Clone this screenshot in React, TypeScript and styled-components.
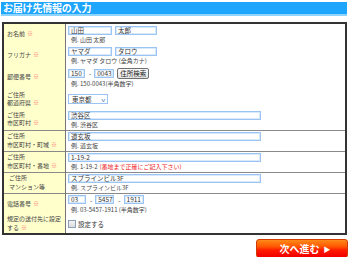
import React from "react";
import styled, { createGlobalStyle } from "styled-components";

const Global = createGlobalStyle`
  html, body {
    margin: 0;
    padding: 0;
    background: #ffffff;
  }
  body {
    font-family: "Noto Sans CJK JP", "Noto Sans", sans-serif;
    color: #333333;
  }
`;

const Page = styled.div`
  width: 350px;
  height: 257px;
  padding: 2px 0 0 1px;
  box-sizing: border-box;
  display: flex;
  flex-direction: column;
`;

const Title = styled.h1`
  margin: 0;
  width: 346px;
  height: 14px;
  box-sizing: border-box;
  background: #1ea5fd;
  border-bottom: 2px solid #8fd3ff;
  color: #ffffff;
  font-size: 10px;
  font-weight: bold;
  line-height: 12px;
  padding-left: 2px;
  letter-spacing: -0.2px;
`;

const Form = styled.table`
  margin: 6px 0 0 1px;
  width: 345px;
  border-collapse: collapse;
  border: 2px solid #333333;
  table-layout: fixed;
`;

const Row = styled.tr<{ $h: number }>`
  height: ${(p) => p.$h}px;
  & + & > td,
  & + & > th {
    border-top: 1px solid #8a8a8a;
  }
`;

const Label = styled.th<{ $indent?: boolean }>`
  width: 58px;
  background: #ffffcc;
  border-right: 1px solid #777777;
  text-align: left;
  vertical-align: middle;
  font-weight: normal;
  font-size: 6px;
  line-height: 8.5px;
  padding: 0 0 0 ${(p) => (p.$indent ? 5 : 3)}px;
  color: #444444;
`;

const Req = styled.span`
  color: #ff7777;
  margin-left: 2px;
`;

const Value = styled.td`
  background: #ffffff;
  vertical-align: middle;
  padding: 0 0 0 2px;
`;

const Stack = styled.div`
  display: flex;
  flex-direction: column;
  gap: 1px;
`;

const Line = styled.div`
  display: flex;
  align-items: center;
  gap: 1px;
`;

const Input = styled.div<{ $w: number }>`
  width: ${(p) => p.$w}px;
  height: 9px;
  box-sizing: border-box;
  border: 1px solid #9cc4f3;
  box-shadow: inset 0 0 0 1px #d9e9fc;
  font-size: 6.5px;
  line-height: 7px;
  padding-left: 2px;
  color: #333333;
  margin-right: 2px;
  white-space: nowrap;
  overflow: hidden;
`;

const Dash = styled.span`
  font-size: 6.5px;
  color: #333333;
  margin: 0 2px 0 1px;
`;

const Button = styled.div`
  height: 11px;
  box-sizing: border-box;
  padding: 0 2px;
  border: 1px solid #6f6f6f;
  border-radius: 2px;
  background: linear-gradient(#fafafa, #e3e3e3);
  font-size: 6.5px;
  line-height: 9px;
  color: #222222;
`;

const Select = styled.div`
  width: 40px;
  height: 10px;
  box-sizing: border-box;
  border: 1px solid #9cc4f3;
  display: flex;
  align-items: center;
  justify-content: space-between;
  padding: 0 2px 0 3px;
  font-size: 6.5px;
  color: #333333;
`;

const Caret = styled.span`
  color: #4a74b8;
  font-size: 5px;
  transform: scaleX(1.4);
`;

const Example = styled.div`
  font-size: 6px;
  line-height: 7px;
  padding-left: 3px;
  color: #444444;
  white-space: nowrap;
`;

const Warn = styled.span`
  color: #ee2222;
  margin-left: 2px;
`;

const Check = styled.label`
  display: flex;
  align-items: center;
  gap: 2px;
  font-size: 6.5px;
  color: #333333;
`;

const Box = styled.span`
  width: 6px;
  height: 6px;
  border: 1px solid #8a9fb8;
  background: linear-gradient(#f3f3f3, #dcdcdc);
`;

const Footer = styled.div`
  display: flex;
  justify-content: flex-end;
  width: 347px;
  margin-top: 4px;
`;

const Next = styled.div`
  width: 92px;
  height: 19px;
  box-sizing: border-box;
  border-radius: 3px;
  border: 1px solid #d43a00;
  background: linear-gradient(#ff8a1a 0%, #ff5500 40%, #ff1a00 60%, #f00000 100%);
  color: #ffffff;
  font-size: 10px;
  font-weight: bold;
  display: flex;
  align-items: center;
  justify-content: center;
  gap: 4px;
  padding-left: 6px;
`;

const Arrow = styled.span`
  font-size: 7px;
`;

type Field = {
  label: React.ReactNode;
  h: number;
  indent?: boolean;
  required?: boolean;
  body: React.ReactNode;
};

const fields: Field[] = [
  {
    label: "お名前",
    h: 22,
    required: true,
    body: (
      <Stack>
        <Line>
          <Input $w={44}>山田</Input>
          <Input $w={42}>太郎</Input>
        </Line>
        <Example>例. 山田 太郎</Example>
      </Stack>
    ),
  },
  {
    label: "フリガナ",
    h: 20,
    required: true,
    body: (
      <Stack>
        <Line>
          <Input $w={44}>ヤマダ</Input>
          <Input $w={42}>タロウ</Input>
        </Line>
        <Example>例. ヤマダ タロウ (全角カナ)</Example>
      </Stack>
    ),
  },
  {
    label: "郵便番号",
    h: 24,
    required: true,
    body: (
      <Stack>
        <Line>
          <Input $w={17}>150</Input>
          <Dash>-</Dash>
          <Input $w={20}>0043</Input>
          <Button>住所検索</Button>
        </Line>
        <Example>例. 150-0043(半角数字)</Example>
      </Stack>
    ),
  },
  {
    label: (
      <>
        ご住所
        <br />
        都道府県
      </>
    ),
    h: 20,
    required: true,
    body: (
      <Select>
        東京都 <Caret>v</Caret>
      </Select>
    ),
  },
  {
    label: (
      <>
        ご住所
        <br />
        市区町村
      </>
    ),
    h: 21,
    required: true,
    body: (
      <Stack>
        <Input $w={193}>渋谷区</Input>
        <Example>例. 渋谷区</Example>
      </Stack>
    ),
  },
  {
    label: (
      <>
        ご住所
        <br />
        市区町村・町域
      </>
    ),
    h: 21,
    required: true,
    body: (
      <Stack>
        <Input $w={193}>道玄坂</Input>
        <Example>例. 道玄坂</Example>
      </Stack>
    ),
  },
  {
    label: (
      <>
        ご住所
        <br />
        市区町村・番地
      </>
    ),
    h: 21,
    required: true,
    body: (
      <Stack>
        <Input $w={193}>1-19-2</Input>
        <Example>
          例. 1-19-2<Warn>(番地まで正確にご記入下さい)</Warn>
        </Example>
      </Stack>
    ),
  },
  {
    label: (
      <>
        ご住所
        <br />
        マンション等
      </>
    ),
    h: 21,
    indent: true,
    body: (
      <Stack>
        <Input $w={193}>スプラインビル3F</Input>
        <Example>例. スプラインビル3F</Example>
      </Stack>
    ),
  },
  {
    label: "電話番号",
    h: 21,
    required: true,
    body: (
      <Stack>
        <Line>
          <Input $w={18}>03</Input>
          <Dash>-</Dash>
          <Input $w={19}>5457</Input>
          <Dash>-</Dash>
          <Input $w={20}>1911</Input>
        </Line>
        <Example>例. 03-5457-1911 (半角数字)</Example>
      </Stack>
    ),
  },
  {
    label: (
      <>
        規定の送付先に設定
        <br />
        する
      </>
    ),
    h: 20,
    required: true,
    body: (
      <Check>
        <Box />
        設定する
      </Check>
    ),
  },
];

export default function App() {
  return (
    <>
      <Global />
      <Page>
        <Title>お届け先情報の入力</Title>
        <Form>
          <tbody>
            {fields.map((f, i) => (
              <Row key={i} $h={f.h}>
                <Label $indent={f.indent}>
                  {f.label}
                  {f.required && <Req>※</Req>}
                </Label>
                <Value>{f.body}</Value>
              </Row>
            ))}
          </tbody>
        </Form>
        <Footer>
          <Next>
            次へ進む<Arrow>▶</Arrow>
          </Next>
        </Footer>
      </Page>
    </>
  );
}
